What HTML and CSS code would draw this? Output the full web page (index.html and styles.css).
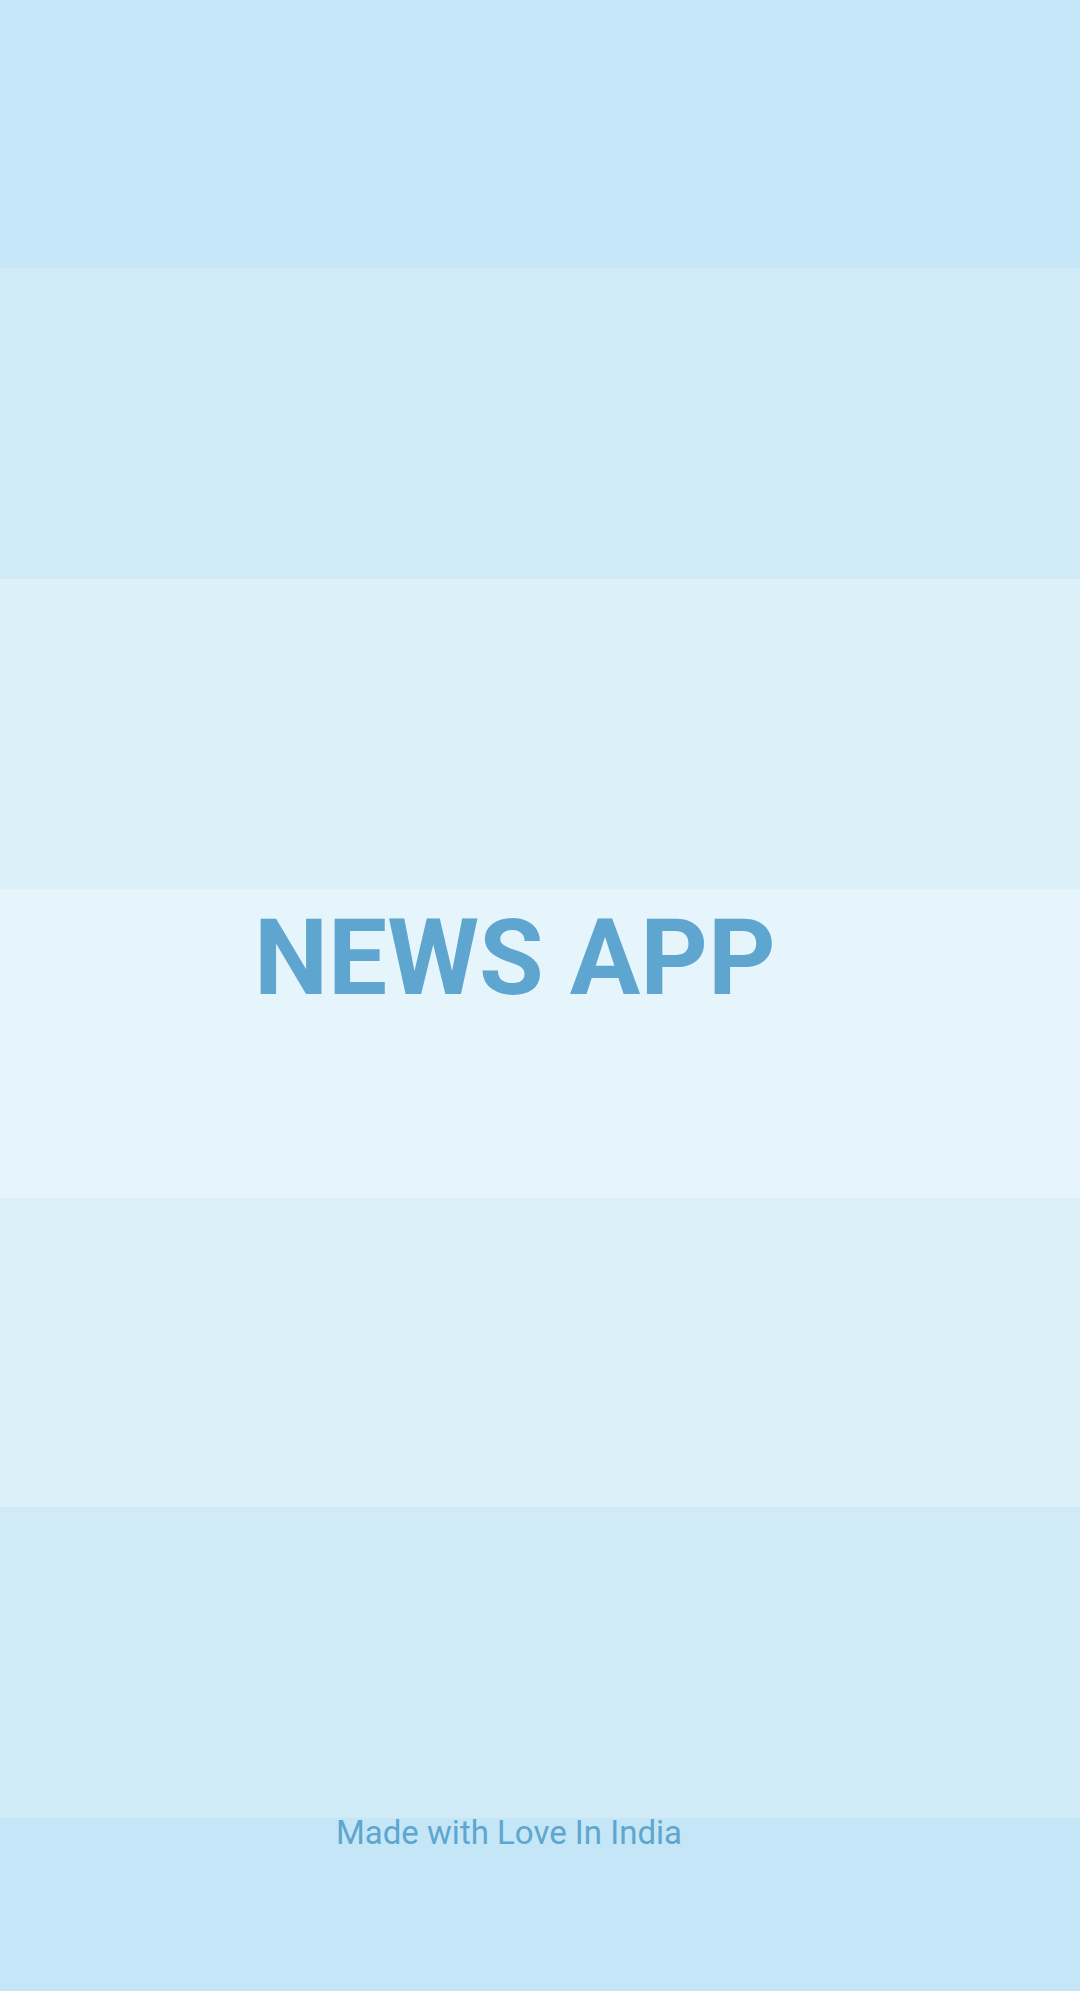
FILE: index.html
```html
<!DOCTYPE html>
<html lang="en">
<head>
<meta charset="utf-8">
<title>News App</title>
<link rel="stylesheet" href="styles.css">
</head>
<body>
<main class="splash">
  <h1 class="title">NEWS APP</h1>
  <p class="credit">Made with Love In India</p>
</main>
</body>
</html>
```

FILE: styles.css
```css
html, body {
  margin: 0;
  padding: 0;
}
body {
  width: 1080px;
  height: 1991px;
  overflow: hidden;
  font-family: Roboto, "Noto Sans", sans-serif;
  background: linear-gradient(to bottom,
    #c4e6f6 0, #c4e6f6 268px,
    #d0ebf7 268px, #d0ebf7 579px,
    #dcf0f9 579px, #dcf0f9 889px,
    #e6f4fb 889px, #e6f4fb 1198px,
    #dcf0f9 1198px, #dcf0f9 1507px,
    #d0ebf7 1507px, #d0ebf7 1818px,
    #c4e6f6 1818px, #c4e6f6 1991px);
}
.splash {
  display: flex;
  flex-direction: column;
  padding-top: 906px;
}
.title {
  margin: 0;
  padding-left: 254px;
  font-size: 105px;
  line-height: 1;
  font-weight: 700;
  color: #5ea6cf;
}
.credit {
  margin: 805px 0 0;
  padding-left: 336px;
  font-size: 33px;
  line-height: 1;
  font-weight: 400;
  color: #5ea6cf;
}
```
